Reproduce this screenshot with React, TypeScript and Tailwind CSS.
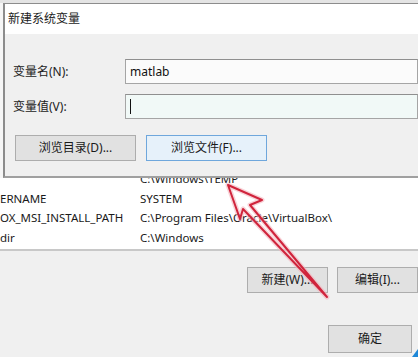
import React from "react";

const font = { fontFamily: "'Noto Sans', 'Noto Sans CJK SC', sans-serif" };

const WinButton = ({ label, className = "" }: { label: string; className?: string }) => (
  <div
    className={`flex items-center justify-center border border-[#adadad] bg-[#e1e1e1] text-[12px] text-[#1a1a1a] ${className}`}
  >
    {label}
  </div>
);

const rows = [
  { name: "", value: "C:\\Windows\\TEMP" },
  { name: "ERNAME", value: "SYSTEM" },
  { name: "OX_MSI_INSTALL_PATH", value: "C:\\Program Files\\Oracle\\VirtualBox\\" },
  { name: "dir", value: "C:\\Windows" },
];

const Arrow = () => (
  <svg className="pointer-events-none absolute left-0 top-0" width="418" height="357" viewBox="0 0 418 357">
    <polygon
      points="228,185 262,200 250,205 327,297 243,209 240,219"
      fill="none"
      stroke="#f4b4bd"
      strokeWidth="5"
      strokeLinejoin="round"
      opacity="0.6"
    />
    <polygon
      points="228,185 262,200 250,205 327,297 243,209 240,219"
      fill="none"
      stroke="#d0243c"
      strokeWidth="2"
      strokeLinejoin="round"
    />
    <path d="M412 357 L418 349 L418 357 Z" fill="#1e88d8" />
  </svg>
);

export default function App() {
  return (
    <div className="relative h-[357px] w-[418px] overflow-hidden bg-[#f0f0f0]" style={font}>
      <div className="h-[3px] bg-[#e4e4e4]" />
      <div className="flex">
        <div className="w-[3px] bg-[#f6f6f6]" />
        {/* dialog */}
        <div className="relative z-10 h-[175px] flex-1 border-l-2 border-t border-b-2 border-[#8c8c8c] border-b-[#a0a0a0] bg-[#f0f0f0]">
          <div className="flex h-[30px] items-center bg-white pl-[3px] text-[12px] text-[#222]">新建系统变量</div>
          <div className="pt-[25px] pl-[8px]">
            <div className="flex h-[25px] items-center">
              <div className="w-[112px] text-[12px] text-[#222]">变量名(N):</div>
              <div className="flex h-[25px] flex-1 items-center border border-[#a5a5a5] border-t-[#8f8f8f] bg-[#fbfbfb] pl-[4px] text-[12px] text-[#111]">
                matlab
              </div>
            </div>
            <div className="mt-[10px] flex h-[25px] items-center">
              <div className="w-[112px] text-[12px] text-[#222]">变量值(V):</div>
              <div className="flex h-[25px] flex-1 items-center border border-[#a5a5a5] border-t-[#8f8f8f] bg-[#f1f9f7] pl-[4px]">
                <div className="h-[15px] w-px bg-[#111]" />
              </div>
            </div>
            <div className="mt-[16px] flex gap-[10px] pl-[2px]">
              <WinButton label="浏览目录(D)..." className="h-[26px] w-[121px]" />
              <div className="flex h-[26px] w-[121px] items-center justify-center border border-[#6fa7dc] bg-[#e6f1fa] text-[12px] text-[#1a1a1a]">
                浏览文件(F)...
              </div>
            </div>
          </div>
        </div>
      </div>
      {/* list behind dialog */}
      <div className="-mt-[9px] border-b-2 border-[#c8c8c8] bg-white">
        {rows.map((r, i) => (
          <div key={i} className="flex h-[19.5px] items-center text-[11.5px] text-[#1a1a1a]">
            <div className="w-[140px] whitespace-nowrap">{r.name}</div>
            <div className="whitespace-nowrap">{r.value}</div>
          </div>
        ))}
        <div className="h-[2px]" />
      </div>
      <div className="mt-[16px] flex justify-end gap-[9px]">
        <WinButton label="新建(W)..." className="h-[26px] w-[81px]" />
        <WinButton label="编辑(I)..." className="h-[26px] w-[81px]" />
      </div>
      <div className="mt-[32px] flex justify-end pr-[6px]">
        <WinButton label="确定" className="h-[28px] w-[84px]" />
      </div>
      <Arrow />
    </div>
  );
}
